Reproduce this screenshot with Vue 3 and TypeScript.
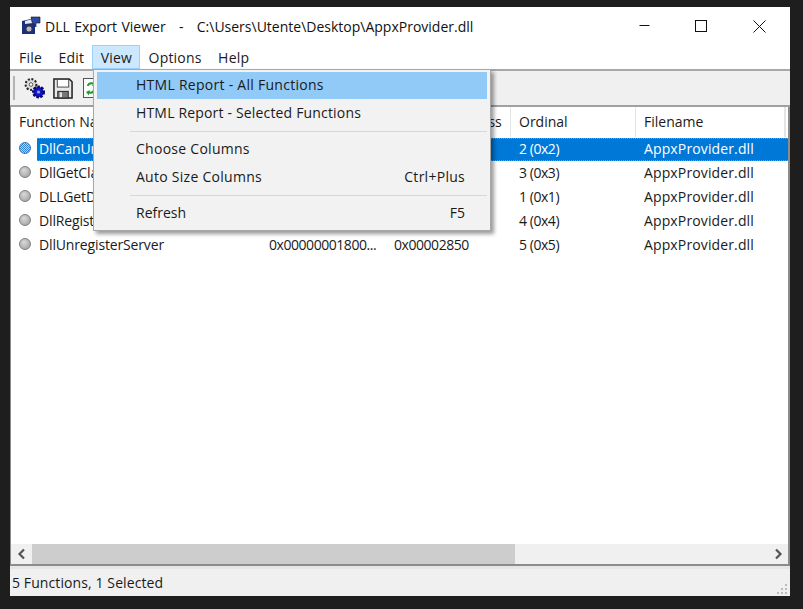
<script setup lang="ts">
interface Row {
  name: string
  address: string
  relative: string
  ordinal: string
  file: string
}

const title = 'DLL Export Viewer   -   C:\\Users\\Utente\\Desktop\\AppxProvider.dll'

const columns = ['Function Name', 'Address', 'Relative Address', 'Ordinal', 'Filename']

const rows: Row[] = [
  { name: 'DllCanUnloadNow', address: '0x00000001800...', relative: '0x00002710', ordinal: '2 (0x2)', file: 'AppxProvider.dll' },
  { name: 'DllGetClassObject', address: '0x00000001800...', relative: '0x00002750', ordinal: '3 (0x3)', file: 'AppxProvider.dll' },
  { name: 'DLLGetDocumentation', address: '0x00000001800...', relative: '0x00002790', ordinal: '1 (0x1)', file: 'AppxProvider.dll' },
  { name: 'DllRegisterServer', address: '0x00000001800...', relative: '0x000027d0', ordinal: '4 (0x4)', file: 'AppxProvider.dll' },
  { name: 'DllUnregisterServer', address: '0x00000001800...', relative: '0x00002850', ordinal: '5 (0x5)', file: 'AppxProvider.dll' },
]

const menus = ['File', 'Edit', 'View', 'Options', 'Help']
</script>

<template>
  <div class="desktop">
    <div class="window">
      <header class="titlebar">
        <svg class="app-icon" width="20" height="20" viewBox="0 0 20 20">
          <path d="M1 5 L14 2 L14 18 L1 18 Z" fill="#1c2f7c" />
          <path d="M4 5 L12 3 L12 7 L4 8 Z" fill="#e8e8f0" />
          <path d="M10 1 L19 1 L19 7 L15 7 L15 11 L11 6 Z" fill="#2b49a8" stroke="#111" stroke-width="0.6" />
          <circle cx="8" cy="13" r="3" fill="#b8b8c0" stroke="#333" stroke-width="0.8" />
        </svg>
        <span class="title-text">{{ title }}</span>
        <div class="caption">
          <span class="cap-btn"><svg width="18" height="12" viewBox="0 0 18 12"><path d="M6.5 5.5 H16.5" stroke="#111" fill="none" /></svg></span>
          <span class="cap-btn"><svg width="12" height="12" viewBox="0 0 12 12"><rect x="0.5" y="0.5" width="11" height="11" stroke="#111" fill="none" /></svg></span>
          <span class="cap-btn"><svg width="13" height="13" viewBox="0 0 13 13"><path d="M0.5 0.5 L12.5 12.5 M12.5 0.5 L0.5 12.5" stroke="#111" fill="none" /></svg></span>
        </div>
      </header>

      <nav class="menubar">
        <span v-for="m in menus" :key="m" class="menu-item" :class="{ open: m === 'View' }">{{ m }}</span>
      </nav>

      <div class="toolbar">
        <span class="grip"></span>
        <svg class="tool gears" width="23" height="24" viewBox="0 0 23 24">
          <circle cx="8" cy="8.5" r="5.4" fill="#dcdcdc" stroke="#222" stroke-width="2" stroke-dasharray="2 1.6" />
          <circle cx="8" cy="8.5" r="1.8" fill="#fff" stroke="#333" stroke-width="0.8" />
          <circle cx="15.5" cy="16" r="5.2" fill="#1414c8" stroke="#08086a" stroke-width="2.6" stroke-dasharray="2.4 1.4" />
          <circle cx="15.5" cy="16" r="1.6" fill="#8fa4ff" />
        </svg>
        <svg class="tool floppy" width="20" height="21" viewBox="0 0 21 22">
          <path d="M1 1 H17 L20 4 V21 H1 Z" fill="#e9e9e9" stroke="#222" stroke-width="1.6" />
          <rect x="4.5" y="1.5" width="12" height="8" fill="#fff" stroke="#444" />
          <rect x="5" y="14" width="11" height="7" fill="#777" stroke="#222" />
          <rect x="7" y="15" width="2.4" height="5" fill="#e9e9e9" />
        </svg>
        <svg class="tool refresh" width="16" height="22" viewBox="0 0 16 22">
          <rect x="0.5" y="1.5" width="15" height="19" fill="#fbfbfb" stroke="#555" />
          <path d="M4 9 C4 6 7 4.5 10 5.5 L10 3.5 L13 7 L9 9 L9.6 7.5 C7.5 7 6 8 6 9 Z" fill="#1f9a2b" />
          <path d="M12 13 C12 16 9 17.5 6 16.5 L6 18.5 L3 15 L7 13 L6.4 14.5 C8.5 15 10 14 10 13 Z" fill="#1f9a2b" />
        </svg>
      </div>

      <section class="list">
        <div class="list-grid">
          <div class="head">
            <span v-for="c in columns" :key="c" class="head-cell">{{ c }}</span>
          </div>
          <div class="body">
            <div v-for="(r, i) in rows" :key="r.name" class="row" :class="{ selected: i === 0 }">
              <span class="cell name-cell">
                <i class="bullet"></i>
                <span class="name">{{ r.name }}</span>
              </span>
              <span class="cell num">{{ r.address }}</span>
              <span class="cell num">{{ r.relative }}</span>
              <span class="cell num">{{ r.ordinal }}</span>
              <span class="cell file">{{ r.file }}</span>
            </div>
          </div>
        </div>
        <div class="hscroll">
          <span class="arrow">
            <svg width="10" height="12" viewBox="0 0 10 12"><path d="M7 1.5 L2.5 6 L7 10.5" stroke="#555" stroke-width="2.2" fill="none" /></svg>
          </span>
          <span class="track"><span class="thumb"></span></span>
          <span class="arrow">
            <svg width="10" height="12" viewBox="0 0 10 12"><path d="M3 1.5 L7.5 6 L3 10.5" stroke="#555" stroke-width="2.2" fill="none" /></svg>
          </span>
        </div>
      </section>

      <footer class="status">
        <span>5 Functions, 1 Selected</span>
        <svg class="sizer" width="12" height="12" viewBox="0 0 12 12" fill="#bdbdbd">
          <rect x="9" y="1" width="2" height="2" />
          <rect x="5" y="5" width="2" height="2" /><rect x="9" y="5" width="2" height="2" />
          <rect x="1" y="9" width="2" height="2" /><rect x="5" y="9" width="2" height="2" /><rect x="9" y="9" width="2" height="2" />
        </svg>
      </footer>

      <div class="dropdown">
        <div class="dd-item active"><span>HTML Report - All Functions</span></div>
        <div class="dd-item second"><span>HTML Report - Selected Functions</span></div>
        <hr />
        <div class="dd-item"><span>Choose Columns</span></div>
        <div class="dd-item"><span>Auto Size Columns</span><span class="shortcut">Ctrl+Plus</span></div>
        <hr class="lower" />
        <div class="dd-item last"><span>Refresh</span><span class="shortcut">F5</span></div>
      </div>
    </div>
  </div>
</template>

<style>
html,
body {
  margin: 0;
  background: #1e1e1e;
}
</style>

<style scoped>
.desktop {
  width: 803px;
  height: 609px;
  padding: 7px 13px 13px 10px;
  box-sizing: border-box;
  background: #1e1e1e;
  font-family: 'Open Sans', 'Noto Sans', sans-serif;
  font-size: 14px;
  color: #1a1a1a;
}

.window {
  position: relative;
  height: 589px;
  display: flex;
  flex-direction: column;
  background: #f0f0f0;
}

.titlebar {
  height: 38px;
  display: flex;
  align-items: center;
  background: #fff;
  padding-left: 11px;
}

.app-icon {
  margin-right: 4px;
}

.title-text {
  white-space: pre;
  word-spacing: 0.8px;
  color: #111;
}

.caption {
  margin-left: auto;
  display: flex;
  padding-right: 1px;
}

.cap-btn {
  width: 59px;
  display: flex;
  justify-content: center;
  align-items: center;
}

.menubar {
  height: 24px;
  display: flex;
  background: #fff;
  border-bottom: 2px solid #a8a8a8;
}

.menu-item {
  padding: 0 6.5px 0 8px;
  display: flex;
  align-items: center;
  border: 1px solid transparent;
  box-sizing: border-box;
  height: 24px;
  letter-spacing: 0.2px;
}

.menu-item.open {
  background: #cce8ff;
  border-color: #99d1ff;
}

.toolbar {
  height: 36px;
  display: flex;
  align-items: center;
  background: #f0f0f0;
  border-bottom: 2px solid #a0a0a0;
  box-sizing: border-box;
}

.grip {
  width: 2px;
  height: 24px;
  background: #b4b4b4;
  margin-left: 3px;
}

.tool {
  flex: none;
}

.gears {
  margin-left: 8px;
}

.floppy {
  margin-left: 7px;
}

.refresh {
  margin-left: 10px;
}

.list {
  flex: 1;
  min-height: 0;
  display: flex;
  flex-direction: column;
  background: #fff;
  border-left: 1px solid #8c8c8c;
  border-bottom: 2px solid #8c8c8c;
  border-right: 2px solid #8c8c8c;
}

.list-grid {
  flex: 1;
  min-height: 0;
  overflow: hidden;
}

.head,
.row {
  display: grid;
  grid-template-columns: 250px 125px 125px 125px 1fr;
}

.head {
  height: 30px;
  margin-right: 2px;
  box-sizing: border-box;
  border-right: 1px solid #e5e5e5;
}

.head-cell {
  display: flex;
  align-items: center;
  padding: 0 0 2px 8px;
  border-right: 1px solid #e5e5e5;
  white-space: nowrap;
  overflow: hidden;
}

.row {
  height: 24px;
  padding-bottom: 2px;
  box-sizing: border-box;
  align-items: center;
}

.cell {
  padding-left: 8px;
  white-space: nowrap;
  overflow: hidden;
}

.num {
  letter-spacing: -0.45px;
}

.file {
  letter-spacing: 0.13px;
}

.name-cell {
  display: flex;
  align-items: center;
  padding-left: 8px;
}

.bullet {
  width: 12px;
  height: 12px;
  border-radius: 50%;
  margin-right: 8px;
  flex: none;
  background: radial-gradient(circle at 40% 35%, #d9d9d9, #9a9a9a);
  border: 1px solid #808080;
  box-sizing: border-box;
}

.name {
  letter-spacing: -0.15px;
}

.row.selected {
  color: #fff;
  background:
    repeating-linear-gradient(90deg, #d98a2b 0 1px, #0078d7 1px 2px) 26px 1px / 100% 1px no-repeat,
    repeating-linear-gradient(90deg, #d98a2b 0 1px, #0078d7 1px 2px) 26px 23px / 100% 1px no-repeat,
    linear-gradient(#0078d7, #0078d7) 26px 1px / 100% 23px no-repeat;
}

.row.selected .bullet {
  background: repeating-conic-gradient(#2f7fd6 0 25%, #bcd9f3 0 50%) 0 0 / 2px 2px;
  border-color: #3a78b5;
}

.hscroll {
  height: 20px;
  display: flex;
  background: #f0f0f0;
}

.arrow {
  width: 21px;
  display: flex;
  align-items: center;
  justify-content: center;
  flex: none;
}

.track {
  flex: 1;
}

.thumb {
  display: block;
  width: 483px;
  height: 100%;
  background: #cdcdcd;
}

.status {
  height: 30px;
  display: flex;
  align-items: center;
  justify-content: space-between;
  padding: 0 2px;
  box-sizing: border-box;
  border-top: 3px solid #e6e6e6;
}

.status > span {
  letter-spacing: 0.1px;
}

.sizer {
  align-self: flex-end;
  margin-bottom: 1px;
}

.dropdown {
  position: absolute;
  left: 83px;
  top: 62px;
  width: 398px;
  height: 162px;
  box-sizing: border-box;
  background: #f2f2f2;
  border: 1px solid #a8a8a8;
  padding: 2px 3px;
  letter-spacing: 0.27px;
  box-shadow: 3px 3px 4px rgba(0, 0, 0, 0.4);
}

.dd-item {
  height: 28px;
  box-sizing: border-box;
  display: flex;
  justify-content: space-between;
  align-items: center;
  padding: 0 22px 2px 39px;
}

.dd-item.active {
  height: 27px;
  margin-bottom: 1px;
  background: #91c9f7;
}

.dd-item.second {
  padding-bottom: 4px;
  letter-spacing: 0.17px;
}

.dd-item.last {
  padding-bottom: 0;
  letter-spacing: 0;
}

.dropdown hr {
  margin: 3px 0 3px 33px;
  border: 0;
  border-top: 1px solid #d7d7d7;
}

.dropdown hr.lower {
  margin: 4px 0 2px 33px;
}

.shortcut {
  color: #1a1a1a;
}
</style>
